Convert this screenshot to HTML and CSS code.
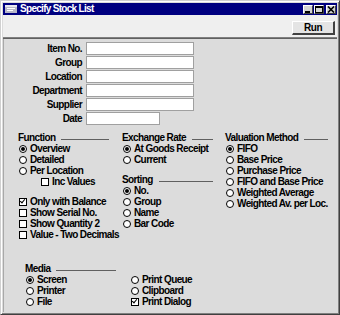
FILE: index.html
```html
<!DOCTYPE html>
<html lang="en">
<head>
    <meta charset="UTF-8">
    <meta name="viewport" content="width=device-width, initial-scale=1.0">
    <title>Specify Stock List</title>
    <link rel="stylesheet" href="styles.css">
</head>
<body>
    <div class="window">
        <div class="titlebar">
            <svg class="app-icon" width="12" height="8" viewBox="0 0 12 8">
                <rect x="0" y="0" width="12" height="8" fill="#b8b8c8"/>
                <rect x="0" y="0" width="12" height="2" fill="#e8e8f0"/>
                <rect x="2" y="3" width="8" height="1" fill="#ffffff"/>
                <rect x="2" y="5" width="6" height="1" fill="#ffffff"/>
            </svg>
            <span class="title">Specify Stock List</span>
            <div class="caption-buttons">
                <span class="cap-btn">
                    <svg width="8" height="7" viewBox="0 0 8 7"><rect x="1" y="5" width="5" height="2" fill="#000"/></svg>
                </span>
                <span class="cap-btn">
                    <svg width="8" height="7" viewBox="0 0 8 7"><rect x="0.5" y="0.5" width="7" height="6" fill="none" stroke="#000"/><rect x="0" y="0" width="8" height="2" fill="#000"/></svg>
                </span>
                <span class="cap-btn close">
                    <svg width="8" height="7" viewBox="0 0 8 7"><path d="M1 0.5 L7 6.5 M7 0.5 L1 6.5" stroke="#000" stroke-width="1.6"/></svg>
                </span>
            </div>
        </div>

        <div class="toolbar">
            <button class="run">Run</button>
        </div>

        <div class="content">
            <div class="fields">
                <label>Item No.</label><span class="input"></span>
                <label>Group</label><span class="input"></span>
                <label>Location</label><span class="input"></span>
                <label>Department</label><span class="input"></span>
                <label>Supplier</label><span class="input"></span>
                <label>Date</label><span class="input short"></span>
            </div>

            <div class="options">
                <div class="col col-function">
                    <div class="heading"><span>Function</span><i></i></div>
                    <div class="item"><span class="radio on"></span>Overview</div>
                    <div class="item"><span class="radio"></span>Detailed</div>
                    <div class="item"><span class="radio"></span>Per Location</div>
                    <div class="item indent"><span class="check"></span>Inc Values</div>
                    <div class="group">
                        <div class="item"><span class="check on"></span>Only with Balance</div>
                        <div class="item"><span class="check"></span>Show Serial No.</div>
                        <div class="item"><span class="check"></span>Show Quantity 2</div>
                        <div class="item"><span class="check"></span>Value - Two Decimals</div>
                    </div>
                </div>

                <div class="col col-rate">
                    <div class="heading"><span>Exchange Rate</span><i></i></div>
                    <div class="item"><span class="radio on"></span>At Goods Receipt</div>
                    <div class="item"><span class="radio"></span>Current</div>
                    <div class="group">
                        <div class="heading"><span>Sorting</span><i></i></div>
                        <div class="item"><span class="radio on"></span>No.</div>
                        <div class="item"><span class="radio"></span>Group</div>
                        <div class="item"><span class="radio"></span>Name</div>
                        <div class="item"><span class="radio"></span>Bar Code</div>
                    </div>
                </div>

                <div class="col col-valuation">
                    <div class="heading"><span>Valuation Method</span><i></i></div>
                    <div class="item"><span class="radio on"></span>FIFO</div>
                    <div class="item"><span class="radio"></span>Base Price</div>
                    <div class="item"><span class="radio"></span>Purchase Price</div>
                    <div class="item"><span class="radio"></span>FIFO and Base Price</div>
                    <div class="item"><span class="radio"></span>Weighted Average</div>
                    <div class="item"><span class="radio"></span>Weighted Av. per Loc.</div>
                </div>
            </div>

            <div class="media">
                <div class="heading"><span>Media</span><i></i></div>
                <div class="media-cols">
                    <div class="media-col">
                        <div class="item"><span class="radio on"></span>Screen</div>
                        <div class="item"><span class="radio"></span>Printer</div>
                        <div class="item"><span class="radio"></span>File</div>
                    </div>
                    <div class="media-col">
                        <div class="item"><span class="radio"></span>Print Queue</div>
                        <div class="item"><span class="radio"></span>Clipboard</div>
                        <div class="item"><span class="check on"></span>Print Dialog</div>
                    </div>
                </div>
            </div>
        </div>
    </div>
</body>
</html>
```

FILE: styles.css
```css
body {
    margin: 0;
    background-color: #c8c8c8;
    font-family: "Liberation Sans", Arial, sans-serif;
    font-size: 10px;
    font-weight: bold;
    letter-spacing: -0.6px;
    color: #000;
}
.window {
    width: 340px;
    height: 315px;
    box-sizing: border-box;
    display: flex;
    flex-direction: column;
    border: 1px solid #d0d0d0;
    border-right-color: #404040;
    border-bottom-color: #404040;
    box-shadow: inset 1px 1px 0 #ffffff, inset -1px -1px 0 #808080;
    padding: 2px 2px 2px 2px;
    background-color: #dcdcdc;
}
.titlebar {
    height: 12px;
    background-color: #000080;
    display: flex;
    align-items: center;
    padding-left: 2px;
    color: #ffffff;
}
.app-icon {
    margin-right: 3px;
    flex-shrink: 0;
}
.title {
    flex: 1;
    letter-spacing: -0.7px;
    line-height: 12px;
}
.caption-buttons {
    display: flex;
    gap: 1px;
    padding-right: 1px;
}
.cap-btn {
    width: 10px;
    height: 9px;
    box-sizing: border-box;
    background-color: #d4d4d4;
    border: 1px solid #ffffff;
    border-right-color: #404040;
    border-bottom-color: #404040;
    display: flex;
    align-items: center;
    justify-content: center;
}
.cap-btn svg {
    display: block;
}
.cap-btn.close {
    margin-left: 1px;
}
.toolbar {
    height: 22px;
    background-color: #efefef;
    display: flex;
    align-items: center;
    justify-content: flex-end;
    padding-right: 2px;
    border-bottom: 1px solid #808080;
    box-shadow: 0 1px 0 #606060;
}
.run {
    width: 43px;
    height: 14px;
    margin-top: 3px;
    padding: 0;
    font-family: inherit;
    font-size: 10px;
    font-weight: bold;
    letter-spacing: -0.4px;
    background-color: #e4e4e4;
    border: 1px solid #ffffff;
    border-right: 2px solid #404040;
    border-bottom: 2px solid #404040;
    color: #000;
}
.content {
    flex: 1;
    background-color: #dcdcdc;
    margin-top: 1px;
    border-left: 1px solid #a8a8a8;
}
.fields {
    display: grid;
    grid-template-columns: 78px 108px;
    column-gap: 4px;
    row-gap: 1px;
    grid-auto-rows: 13px;
    margin-top: 3px;
}
.fields label {
    text-align: right;
    line-height: 13px;
}
.input {
    background-color: #ffffff;
    border: 1px solid #a0a0a0;
    box-sizing: border-box;
}
.input.short {
    width: 74px;
}
.options {
    display: flex;
    margin-top: 6px;
    padding-left: 14px;
}
.col-function {
    width: 91px;
    margin-right: 13px;
}
.col-rate {
    width: 91px;
    margin-right: 12px;
}
.col-valuation {
    width: 103px;
}
.heading {
    display: flex;
    align-items: center;
    height: 12px;
}
.heading i {
    flex: 1;
    height: 0;
    margin-left: 6px;
    margin-top: 5px;
    border-top: 1px solid #606060;
}
.item {
    display: flex;
    align-items: center;
    height: 11px;
    white-space: nowrap;
}
.item.indent {
    padding-left: 22px;
}
.col-function .group {
    margin-top: 9px;
}
.col-rate .group {
    margin-top: 8px;
}
.radio {
    flex-shrink: 0;
    width: 8px;
    height: 8px;
    box-sizing: border-box;
    border: 1px solid #000;
    border-radius: 50%;
    background-color: #ffffff;
    margin-left: 1px;
    margin-right: 3px;
    position: relative;
}
.radio.on::after {
    content: "";
    position: absolute;
    left: 1px;
    top: 1px;
    width: 4px;
    height: 4px;
    border-radius: 50%;
    background-color: #000;
}
.check {
    flex-shrink: 0;
    width: 8px;
    height: 8px;
    box-sizing: border-box;
    border: 1px solid #000;
    background-color: #ffffff;
    margin-left: 1px;
    margin-right: 3px;
    position: relative;
}
.check.on::after {
    content: "";
    position: absolute;
    left: 1px;
    top: -1px;
    width: 2px;
    height: 4px;
    border-right: 1.5px solid #000;
    border-bottom: 1.5px solid #000;
    transform: rotate(40deg);
}
.media {
    margin-top: 22px;
    margin-left: 21px;
}
.media .heading {
    width: 91px;
}
.media-cols {
    display: flex;
}
.media-col {
    width: 105px;
}
```
